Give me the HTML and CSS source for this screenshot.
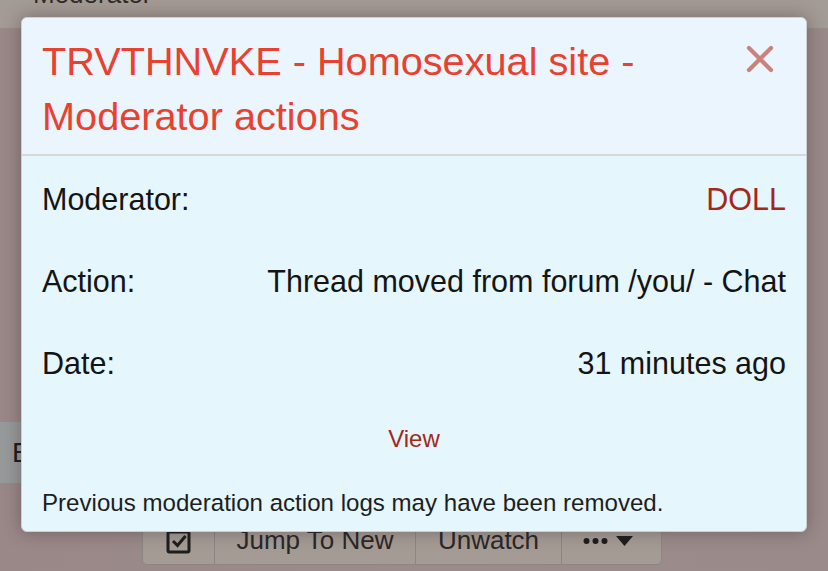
FILE: index.html
```html
<!DOCTYPE html>
<html lang="en">
<head>
<meta charset="utf-8">
<title>Moderator actions</title>
<link rel="stylesheet" href="styles.css">
</head>
<body>
<div class="page">
  <div class="topbar"><span class="topbar-text">Moderator</span></div>
  <div class="content">
    <div class="side-btn">E</div>
    <div class="btn-group">
      <span class="btn btn-icon">
        <svg width="28" height="26" viewBox="0 0 28 26"><rect x="3" y="4" width="21" height="20" rx="1.5" fill="none" stroke="#1e1e1e" stroke-width="3"/><path d="M8 13 L12.5 17.5 L20.5 8" fill="none" stroke="#1e1e1e" stroke-width="3"/></svg>
      </span>
      <span class="btn btn-jump">Jump To New</span>
      <span class="btn btn-unwatch">Unwatch</span>
      <span class="btn btn-more">
        <svg width="52" height="14" viewBox="0 0 52 14"><circle cx="3.5" cy="7" r="3" fill="#1e1e1e"/><circle cx="12.5" cy="7" r="3" fill="#1e1e1e"/><circle cx="21.5" cy="7" r="3" fill="#1e1e1e"/><path d="M33 2 L50 2 L41.5 12 Z" fill="#1e1e1e"/></svg>
      </span>
    </div>
  </div>
</div>

<div class="dialog">
  <div class="dialog-head">
    <h1 class="dialog-title">TRVTHNVKE - Homosexual site - Moderator actions</h1>
    <span class="dialog-close">
      <svg width="28" height="28" viewBox="0 0 28 28"><path d="M3 3 L25 25 M25 3 L3 25" stroke="#c9837c" stroke-width="4.2" stroke-linecap="round"/></svg>
    </span>
  </div>
  <div class="dialog-body">
    <dl class="info">
      <div class="info-row"><dt>Moderator:</dt><dd class="mod-name">DOLL</dd></div>
      <div class="info-row"><dt>Action:</dt><dd>Thread moved from forum /you/ - Chat</dd></div>
      <div class="info-row"><dt>Date:</dt><dd>31 minutes ago</dd></div>
    </dl>
    <div class="view-link">View</div>
    <p class="note">Previous moderation action logs may have been removed.</p>
  </div>
</div>
</body>
</html>
```

FILE: styles.css
```css
html, body {
  margin: 0;
  padding: 0;
}
body {
  width: 828px;
  height: 571px;
  overflow: hidden;
  font-family: "Liberation Sans", Arial, sans-serif;
  background: #9c8b8a;
}
.page {
  height: 571px;
  display: flex;
  flex-direction: column;
}
.topbar {
  height: 28px;
  background: #a39b95;
  border-bottom: 1px solid #968c88;
  overflow: hidden;
}
.topbar-text {
  display: block;
  padding-left: 33px;
  margin-top: -21px;
  font-size: 26px;
  line-height: 30px;
  color: #2e2b29;
}
.content {
  flex: 1;
  display: flex;
  flex-direction: column;
  padding-top: 393px;
  background: linear-gradient(90deg, #9a8888 0%, #9c8b8b 50%, #9a8a89 100%);
}
.side-btn {
  width: 20px;
  height: 61px;
  background: #969a9a;
  border-radius: 0 4px 4px 0;
  font-size: 28px;
  line-height: 61px;
  padding-left: 12px;
  color: #1c1c1c;
  overflow: hidden;
  box-sizing: content-box;
}
.btn-group {
  margin-top: 37px;
  margin-left: 142px;
  width: 520px;
  height: 45px;
  display: flex;
  background: #a59b95;
  border: 1px solid #8e8683;
  border-radius: 0 0 5px 5px;
  box-sizing: border-box;
}
.btn {
  display: flex;
  align-items: center;
  justify-content: center;
  font-size: 26px;
  color: #2a2827;
  border-right: 1px solid #8e8683;
  padding-bottom: 4px;
  box-sizing: border-box;
}
.btn svg { display: block; }
.btn-icon { width: 72px; }
.btn-jump { width: 201px; }
.btn-unwatch { width: 146px; }
.btn-more { flex: 1; border-right: 0; padding-right: 5px; }

.dialog {
  position: absolute;
  left: 21px;
  top: 17px;
  width: 786px;
  height: 515px;
  box-sizing: border-box;
  border: 1px solid #cfcfcf;
  border-radius: 6px;
  background: #e5f6fd;
  box-shadow: 0 0 18px rgba(40, 20, 20, 0.35);
  overflow: hidden;
  display: flex;
  flex-direction: column;
}
.dialog-head {
  background: #ebf5fd;
  border-bottom: 2px solid #d8d8d8;
  padding: 16px 20px 10px 20px;
  display: flex;
  align-items: flex-start;
  justify-content: space-between;
}
.dialog-title {
  margin: 0;
  width: 640px;
  font-weight: normal;
  font-size: 39.7px;
  line-height: 55px;
  color: #e8412f;
}
.dialog-close {
  margin-top: 11px;
  margin-right: 12px;
  width: 28px;
  height: 28px;
}
.dialog-close svg { display: block; }
.dialog-body {
  flex: 1;
  padding: 2px 20px 0 20px;
  display: flex;
  flex-direction: column;
}
.info {
  margin: 0;
}
.info-row {
  display: flex;
  justify-content: space-between;
  padding: 24px 0;
  font-size: 30.5px;
  line-height: 34px;
  color: #141414;
}
.info-row dt, .info-row dd {
  margin: 0;
}
.mod-name {
  color: #a3281c;
}
.view-link {
  margin-top: 21px;
  text-align: center;
  font-size: 24px;
  line-height: 28px;
  color: #a3281c;
}
.note {
  margin: 36px 0 0 0;
  font-size: 24.1px;
  line-height: 28px;
  color: #1e1e1e;
}
```
